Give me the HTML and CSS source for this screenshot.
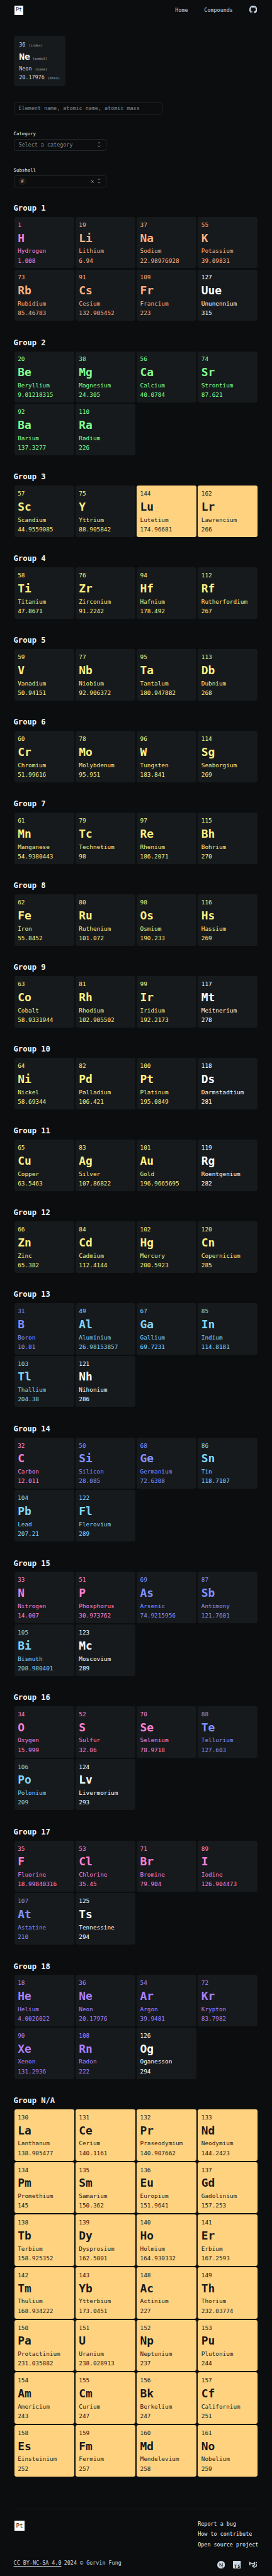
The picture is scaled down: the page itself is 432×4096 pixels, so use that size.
FILE: index.html
```html
<!DOCTYPE html>
<html lang="en">
<head>
<meta charset="utf-8">
<title>Periodic Table</title>
<link rel="stylesheet" href="styles.css">
</head>
<body>
<header class="header">
  <a class="logo">Pt</a>
  <nav class="nav">
    <a>Home</a>
    <a>Compounds</a>
    <svg class="icon" viewBox="1 1.1 22 22"><path d="M12 1.27a11 11 0 00-3.48 21.46c.55.09.73-.28.73-.55v-1.84c-3.03.64-3.67-1.46-3.67-1.46-.55-1.29-1.28-1.65-1.28-1.65-.92-.65.1-.65.1-.65 1.1 0 1.73 1.1 1.73 1.1.92 1.65 2.57 1.2 3.21.92a2 2 0 01.64-1.47c-2.47-.27-5.04-1.19-5.04-5.5 0-1.1.46-2.1 1.2-2.84a3.76 3.76 0 010-2.93s.91-.28 3.11 1.1c1.8-.49 3.7-.49 5.5 0 2.1-1.38 3.02-1.1 3.02-1.1a3.76 3.76 0 01.1 2.93c.83.74 1.2 1.74 1.2 2.94 0 4.21-2.57 5.13-5.04 5.4.45.37.82.92.82 2.02v3.03c0 .27.1.64.73.55A11 11 0 0012 1.27"/></svg>
  </nav>
</header>
<main class="main">
  <div class="example">
    <div class="example-index">36 <small>(index)</small></div>
    <div class="example-symbol">Ne<small>(symbol)</small></div>
    <div class="example-line">Neon <small>(name)</small></div>
    <div class="example-line">20.17976 <small>(mass)</small></div>
  </div>
  <div class="field search">Element name, atomic name, atomic mass</div>
  <div class="label">Category</div>
  <div class="field select">
    <span class="grow">Select a category</span>
    <svg class="unfold" viewBox="0 0 8 16"><path d="M1 5l3-3 3 3M1 11l3 3 3-3"/></svg>
  </div>
  <div class="label">Subshell</div>
  <div class="field select">
    <span class="grow"><span class="chip">F</span></span>
    <svg class="clear" viewBox="0 0 10 10"><path d="M1 1l8 8M9 1l-8 8"/></svg>
    <svg class="unfold" viewBox="0 0 8 16"><path d="M1 5l3-3 3 3M1 11l3 3 3-3"/></svg>
  </div>
  <div id="groups"></div>
</main>
<footer class="footer">
  <div class="footer-top">
    <a class="logo logo-large">Pt</a>
    <div class="links"><a>Report a bug</a><a>How to contribute</a><a>Open source project</a></div>
  </div>
  <div class="footer-bottom">
    <div class="copyright"><a class="license">CC BY-NC-SA 4.0</a><span>2024 © Gervin Fung</span></div>
    <div class="stack">
      <svg class="icon" viewBox="0 0 22 22"><circle cx="11" cy="11" r="11"/><path class="cut" d="M7.2 15.8V6.6L16.6 19.4M14.6 6.3v8"/></svg>
      <svg class="icon" viewBox="0 0 22 22"><rect width="22" height="22" rx="1"/><text class="ts" x="3.2" y="19.6" textLength="17">TS</text></svg>
      <svg class="icon" viewBox="0 0 24 24"><path d="M0 2.475v10.39l3 1.733V7.67l6 3.465 6-3.465v3.465l-6 3.463v3.464l6 3.463 9-5.195V9.402l-3 1.733v3.463l-6 3.464-3-1.732 6-3.465V2.475L9 7.67 0 2.475zM24 2.475l-3 1.733v3.463l3-1.732V2.475z"/></svg>
    </div>
  </div>
</footer>
<script src="elements.js"></script>
</body>
</html>
```
FILE: styles.css
```css
* { box-sizing: border-box; }

/* 1rem is ten design pixels */
html { font-size: 5.2641px; }

body {
  margin: 0;
  background: #0b0d0e;
  color: #cdd7e1;
  font: 1.6rem/1.5 "DejaVu Sans Mono", monospace;
}

.header {
  display: flex;
  justify-content: space-between;
  align-items: flex-start;
  height: 6.3rem;
  padding: 1.8rem 4.55rem 0 4.3rem;
}
.logo {
  display: flex;
  justify-content: center;
  width: 2.8rem;
  height: 2.8rem;
  background: #fff;
  color: #0b0d0e;
  font-size: 1.52rem;
  line-height: 2.7rem;
}
.logo-large {
  width: 3.15rem;
  height: 3.15rem;
  margin-top: .25rem;
  font-size: 1.72rem;
  line-height: 3.1rem;
}
.nav { display: flex; align-items: center; gap: 4.9rem; line-height: 2.3rem; }
.icon { display: block; width: 2.35rem; height: 2.35rem; fill: #cdd7e1; }

.main { padding: 4.5rem 4.1rem 0; }

.example {
  width: 15.65rem;
  padding: 1.4rem 1.65rem;
  border-radius: .8rem;
  background: #171a1c;
  white-space: nowrap;
}
.example small { color: #9fa6ad; font-size: 1.02rem; font-weight: normal; line-height: 0; }
.example-index { line-height: 2.8rem; }
.example-symbol { color: #f0f4f8; font-size: 2.8rem; font-weight: bold; line-height: 4.3rem; }
.example-symbol small { margin-left: .7rem; letter-spacing: -.07rem; }
.example-line { line-height: 2.7rem; }

.field {
  display: flex;
  align-items: center;
  height: 3.6rem;
  padding: 0 1.3rem;
  border: 1px solid #24292d;
  border-radius: .6rem;
  color: #84898f;
}
.search { width: 45rem; margin-top: 4.82rem; }
.select { width: 28rem; margin-top: .6rem; padding-right: 1.5rem; }
.grow { flex: 1; }
.label { margin-top: 4.72rem; color: #f0f4f8; font-size: 1.4rem; line-height: 2.1rem; }
.chip {
  display: flex;
  align-items: center;
  justify-content: center;
  width: 2.4rem;
  height: 2.4rem;
  border-radius: 50%;
  background: #171a1c;
  color: #ffd280;
  font-size: 1.4rem;
}
.unfold { width: .9rem; height: 1.8rem; fill: none; stroke: #9fa6ad; stroke-width: 1.5; }
.clear { width: 1rem; height: 1rem; margin-right: 1.15rem; fill: none; stroke: #cdd7e1; stroke-width: 1.4; }

.group { margin-top: 4.86rem; }
.group:first-child { margin-top: 4.64rem; }
.group-title {
  margin: 0 0 .84rem;
  color: #f0f4f8;
  font-size: 2.3rem;
  line-height: 3.5rem;
}
.group-cards {
  display: grid;
  grid-template-columns: repeat(4, 1fr);
  gap: .4rem;
  padding: 0 .2rem;
}
.card {
  height: 15.5rem;
  padding: .93rem 0 0 1.05rem;
  border-radius: .6rem;
  background: #171a1c;
  font-size: 1.78rem;
  line-height: 2.9rem;
  white-space: nowrap;
}
.card-symbol { padding-top: .1rem; font-size: 3.4rem; font-weight: bold; line-height: 4.9rem; }

.nonmetal { color: #ff80d5; }
.alkali { color: #ffaf80; }
.alkaline { color: #80ff90; }
.transition { color: #ffee80; }
.post { color: #80d5ff; }
.metalloid { color: #8091ff; }
.noble { color: #aa80ff; }
.unknown { color: #fff; }
.inner { background: #ffd280; color: #171a1c; }

.footer {
  margin: 9.78rem 4.1rem 0;
  padding-top: 3.13rem;
  border-top: 1px solid #1c2023;
}
.footer-top { display: flex; justify-content: space-between; padding-left: .2rem; }
.links { display: flex; flex-direction: column; gap: .8rem; line-height: 2.4rem; color: #f0f4f8; }
.footer-bottom { display: flex; justify-content: space-between; margin-top: 3.16rem; }
.copyright { display: flex; gap: .8rem; line-height: 2.4rem; }
.license { text-decoration: underline; text-underline-offset: .3rem; }
.stack { display: flex; gap: 2.5rem; padding: .5rem .45rem 0 0; }
.cut { fill: none; stroke: #0b0d0e; stroke-width: 1.5; }
.ts { fill: #0b0d0e; font: bold 13.5px "Open Sans", sans-serif; }
```
FILE: elements.js
```js
const kinds = {
  n: "nonmetal", a: "alkali", e: "alkaline", t: "transition", p: "post",
  m: "metalloid", g: "noble", u: "unknown", i: "inner"
};

// Each element: index, symbol, name, mass, kind
const groups = {
  "1": "1 H Hydrogen 1.008 n|19 Li Lithium 6.94 a|37 Na Sodium 22.98976928 a|55 K Potassium 39.09831 a|73 Rb Rubidium 85.46783 a|91 Cs Cesium 132.905452 a|109 Fr Francium 223 a|127 Uue Ununennium 315 u",
  "2": "20 Be Beryllium 9.01218315 e|38 Mg Magnesium 24.305 e|56 Ca Calcium 40.0784 e|74 Sr Strontium 87.621 e|92 Ba Barium 137.3277 e|110 Ra Radium 226 e",
  "3": "57 Sc Scandium 44.9559085 t|75 Y Yttrium 88.905842 t|144 Lu Lutetium 174.96681 i|162 Lr Lawrencium 266 i",
  "4": "58 Ti Titanium 47.8671 t|76 Zr Zirconium 91.2242 t|94 Hf Hafnium 178.492 t|112 Rf Rutherfordium 267 t",
  "5": "59 V Vanadium 50.94151 t|77 Nb Niobium 92.906372 t|95 Ta Tantalum 180.947882 t|113 Db Dubnium 268 t",
  "6": "60 Cr Chromium 51.99616 t|78 Mo Molybdenum 95.951 t|96 W Tungsten 183.841 t|114 Sg Seaborgium 269 t",
  "7": "61 Mn Manganese 54.9380443 t|79 Tc Technetium 98 t|97 Re Rhenium 186.2071 t|115 Bh Bohrium 270 t",
  "8": "62 Fe Iron 55.8452 t|80 Ru Ruthenium 101.072 t|98 Os Osmium 190.233 t|116 Hs Hassium 269 t",
  "9": "63 Co Cobalt 58.9331944 t|81 Rh Rhodium 102.905502 t|99 Ir Iridium 192.2173 t|117 Mt Meitnerium 278 u",
  "10": "64 Ni Nickel 58.69344 t|82 Pd Palladium 106.421 t|100 Pt Platinum 195.0849 t|118 Ds Darmstadtium 281 u",
  "11": "65 Cu Copper 63.5463 t|83 Ag Silver 107.86822 t|101 Au Gold 196.9665695 t|119 Rg Roentgenium 282 u",
  "12": "66 Zn Zinc 65.382 t|84 Cd Cadmium 112.4144 t|102 Hg Mercury 200.5923 t|120 Cn Copernicium 285 t",
  "13": "31 B Boron 10.81 m|49 Al Aluminium 26.98153857 p|67 Ga Gallium 69.7231 p|85 In Indium 114.8181 p|103 Tl Thallium 204.38 p|121 Nh Nihonium 286 u",
  "14": "32 C Carbon 12.011 n|50 Si Silicon 28.085 m|68 Ge Germanium 72.6308 m|86 Sn Tin 118.7107 p|104 Pb Lead 207.21 p|122 Fl Flerovium 289 p",
  "15": "33 N Nitrogen 14.007 n|51 P Phosphorus 30.973762 n|69 As Arsenic 74.9215956 m|87 Sb Antimony 121.7601 m|105 Bi Bismuth 208.980401 p|123 Mc Moscovium 289 u",
  "16": "34 O Oxygen 15.999 n|52 S Sulfur 32.06 n|70 Se Selenium 78.9718 n|88 Te Tellurium 127.603 m|106 Po Polonium 209 p|124 Lv Livermorium 293 u",
  "17": "35 F Fluorine 18.99840316 n|53 Cl Chlorine 35.45 n|71 Br Bromine 79.904 n|89 I Iodine 126.904473 n|107 At Astatine 210 m|125 Ts Tennessine 294 u",
  "18": "18 He Helium 4.0026022 g|36 Ne Neon 20.17976 g|54 Ar Argon 39.9481 g|72 Kr Krypton 83.7982 g|90 Xe Xenon 131.2936 g|108 Rn Radon 222 g|126 Og Oganesson 294 u",
  "N/A": "130 La Lanthanum 138.905477 i|131 Ce Cerium 140.1161 i|132 Pr Praseodymium 140.907662 i|133 Nd Neodymium 144.2423 i|134 Pm Promethium 145 i|135 Sm Samarium 150.362 i|136 Eu Europium 151.9641 i|137 Gd Gadolinium 157.253 i|138 Tb Terbium 158.925352 i|139 Dy Dysprosium 162.5001 i|140 Ho Holmium 164.930332 i|141 Er Erbium 167.2593 i|142 Tm Thulium 168.934222 i|143 Yb Ytterbium 173.0451 i|148 Ac Actinium 227 i|149 Th Thorium 232.03774 i|150 Pa Protactinium 231.035882 i|151 U Uranium 238.028913 i|152 Np Neptunium 237 i|153 Pu Plutonium 244 i|154 Am Americium 243 i|155 Cm Curium 247 i|156 Bk Berkelium 247 i|157 Cf Californium 251 i|158 Es Einsteinium 252 i|159 Fm Fermium 257 i|160 Md Mendelevium 258 i|161 No Nobelium 259 i"
};

const card = (entry) => {
  const [index, symbol, name, mass, kind] = entry.split(" ");
  return `<article class="card ${kinds[kind]}"><div>${index}</div><div class="card-symbol">${symbol}</div><div>${name}</div><div>${mass}</div></article>`;
};

// Numeric keys iterate in ascending order, then "N/A"
document.getElementById("groups").innerHTML = Object.entries(groups)
  .map(([title, list]) => `<section class="group"><h2 class="group-title">Group ${title}</h2><div class="group-cards">${list.split("|").map(card).join("")}</div></section>`)
  .join("");
```
